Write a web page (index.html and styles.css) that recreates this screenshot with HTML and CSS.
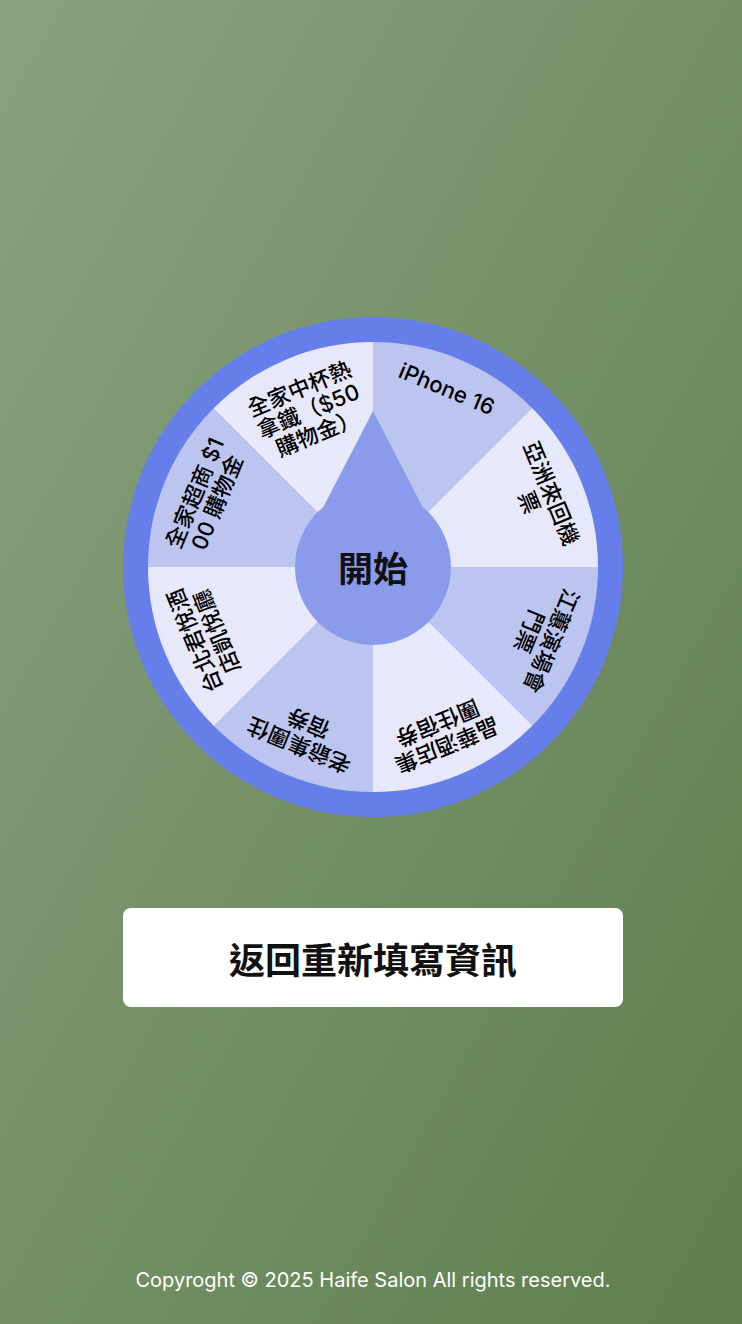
FILE: index.html
```html
<!DOCTYPE html>
<html lang="zh-Hant">
<head>
<meta charset="utf-8">
<title>Lucky Wheel</title>
<link rel="stylesheet" href="styles.css">
</head>
<body>
<main class="page">
  <div class="wheel">
    <div class="disk">
      <div class="label">iPhone 16</div>
      <div class="label">亞洲來回機票</div>
      <div class="label">江蕙演場會門票</div>
      <div class="label">晶華酒店集團住宿券</div>
      <div class="label">老爺集團住宿券</div>
      <div class="label">台北君悅酒店凱悅廳</div>
      <div class="label">全家超商 $100 購物金</div>
      <div class="label">全家中杯熱拿鐵（$50購物金）</div>
      <button class="hub" type="button"><span class="hub-text">開始</span></button>
    </div>
  </div>
  <button class="back-btn" type="button">返回重新填寫資訊</button>
  <footer class="footer">Copyroght © 2025 Haife Salon All rights reserved.</footer>
</main>
</body>
</html>
```
FILE: styles.css
```css
html, body {
  margin: 0;
  padding: 0;
}

body {
  min-height: 1324px;
  background: linear-gradient(to bottom right, #8aa37f, #5f7d4e);
  font-family: Inter, "Noto Sans CJK TC", sans-serif;
  color: #000;
}

.page {
  display: flex;
  flex-direction: column;
  align-items: center;
  padding: 317px 0 0 4px;
}

.wheel {
  width: 500px;
  height: 500px;
  box-sizing: border-box;
  padding: 25px;
  border-radius: 50%;
  background: #667eea;
}

.disk {
  position: relative;
  width: 450px;
  height: 450px;
  border-radius: 50%;
  background: conic-gradient(
    #bcc5ef 0deg 45deg,
    #e8e8fb 45deg 90deg,
    #bcc5ef 90deg 135deg,
    #e8e8fb 135deg 180deg,
    #bcc5ef 180deg 225deg,
    #e8e8fb 225deg 270deg,
    #bcc5ef 270deg 315deg,
    #e8e8fb 315deg 360deg
  );
}

.label {
  position: absolute;
  top: 0;
  left: 50%;
  width: 120px;
  height: 225px;
  margin-left: -60px;
  box-sizing: border-box;
  padding-top: 20px;
  transform-origin: 50% 100%;
  font-size: 22px;
  font-weight: 500;
  line-height: 24px;
  text-align: center;
  word-break: break-all;
}

.label:nth-child(1) { transform: rotate(22.5deg); }
.label:nth-child(2) { transform: rotate(67.5deg); }
.label:nth-child(3) { transform: rotate(112.5deg); }
.label:nth-child(4) { transform: rotate(157.5deg); }
.label:nth-child(5) { transform: rotate(202.5deg); }
.label:nth-child(6) { transform: rotate(247.5deg); }
.label:nth-child(7) { transform: rotate(292.5deg); }
.label:nth-child(8) { transform: rotate(337.5deg); }

.hub {
  position: absolute;
  top: 50%;
  left: 50%;
  width: 156px;
  height: 156px;
  margin: -78px 0 0 -78px;
  padding: 0;
  border: none;
  border-radius: 50%;
  background: #8b9beb;
  display: flex;
  align-items: center;
  justify-content: center;
  font-family: inherit;
  cursor: pointer;
}

.hub::before {
  content: "";
  position: absolute;
  top: -78px;
  left: 18px;
  width: 120px;
  height: 116px;
  background: #8b9beb;
  clip-path: polygon(50% 0, 100% 100%, 0 100%);
}

.hub-text {
  position: relative;
  font-size: 35px;
  font-weight: 700;
  color: #111;
  line-height: 1;
  margin-top: 4px;
}

.back-btn {
  width: 500px;
  height: 99px;
  margin-top: 91px;
  border: none;
  border-radius: 8px;
  background: #fff;
  font-family: inherit;
  font-size: 36px;
  font-weight: 700;
  color: #111;
  cursor: pointer;
}

.footer {
  margin-top: 261px;
  font-size: 20px;
  line-height: 24px;
  color: #fff;
  text-align: center;
}
```
